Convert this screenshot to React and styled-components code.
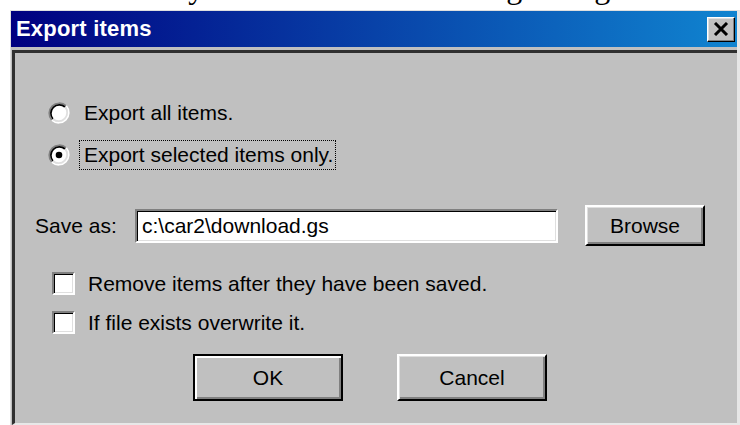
import React from "react";
import styled, { createGlobalStyle } from "styled-components";

const GlobalStyle = createGlobalStyle`
  html, body {
    margin: 0;
    padding: 0;
    background: #fff;
    overflow: hidden;
  }
  * { box-sizing: border-box; }
`;

const Page = styled.div`
  width: 740px;
  height: 425px;
  display: flex;
  flex-direction: column;
  overflow: hidden;
  background: #fff;
`;

/* last line of the document text above the dialog, mostly scrolled off */
const Lead = styled.div`
  height: 10px;
  flex: none;
  display: flex;
  align-items: flex-end;
  overflow: hidden;
  padding-left: 14px;
  font-family: "Liberation Serif", "Times New Roman", serif;
  font-size: 32px;
  white-space: nowrap;
  color: #000;
  span {
    line-height: 36px;
    margin-bottom: 5px;
  }
`;

const Window = styled.div`
  margin-left: 10px;
  width: 730px;
  flex: 1;
  display: flex;
  flex-direction: column;
  background: #c0c0c0;
  border-top: 1px solid #dfdfdf;
  border-left: 1px solid #dfdfdf;
  border-right: 3px solid #e6e6e6;
  font-family: "Liberation Sans", Arial, sans-serif;
  font-size: 21px;
  color: #000;
`;

const TitleBar = styled.div`
  height: 36px;
  flex: none;
  display: flex;
  align-items: center;
  justify-content: space-between;
  padding: 0 2px 0 5px;
  background: linear-gradient(to right, #000080, #1084d0);
`;

const Title = styled.span`
  color: #fff;
  font-weight: bold;
  font-size: 22px;
  letter-spacing: 0.2px;
`;

const CloseButton = styled.button`
  width: 28px;
  height: 25px;
  padding: 0;
  display: flex;
  align-items: center;
  justify-content: center;
  background: #c0c0c0;
  border: 1px solid;
  border-color: #fff #000 #000 #fff;
  box-shadow: inset -1px -1px #808080, inset 1px 1px #dfdfdf;
`;

const Client = styled.div`
  flex: 1;
  margin: 3px 0 0 1px;
  display: flex;
  flex-direction: column;
  border-top: 3px solid #303030;
  border-left: 3px solid #303030;
  border-bottom: 2px solid #e8e8e8;
`;

const RadioGroup = styled.div`
  margin: 45px 0 0 33px;
  display: flex;
  flex-direction: column;
  gap: 12px;
`;

const OptionRow = styled.label`
  height: 30px;
  display: flex;
  align-items: center;
  gap: 9px;
`;

const OptionText = styled.span`
  height: 30px;
  display: flex;
  align-items: center;
  padding: 0 2px 0 4px;
  border: 1px dotted ${(p) => (p.$focused ? "#000" : "transparent")};
  white-space: nowrap;
`;

const SaveRow = styled.div`
  margin: 35px 0 0 20px;
  height: 41px;
  display: flex;
  align-items: center;
`;

const FieldLabel = styled.span`
  width: 100px;
`;

const PathField = styled.div`
  width: 423px;
  height: 34px;
  display: flex;
  align-items: center;
  padding-left: 5px;
  background: #fff;
  border: 2px solid;
  border-color: #808080 #fff #fff #808080;
  box-shadow: inset 1px 1px #000, inset -1px -1px #dfdfdf;
  white-space: nowrap;
`;

const Button = styled.button`
  width: ${(p) => p.$w}px;
  height: ${(p) => p.$h}px;
  margin-left: ${(p) => p.$gap || 0}px;
  padding: 0;
  font-family: "Liberation Sans", Arial, sans-serif;
  font-size: 21px;
  color: #000;
  background: #c0c0c0;
  border: 2px solid;
  border-color: ${(p) => (p.$default ? "#000" : "#fff #000 #000 #fff")};
  box-shadow: ${(p) =>
    p.$default
      ? "inset 2px 2px #fff, inset -2px -2px #808080"
      : "inset 1px 1px #dfdfdf, inset -2px -2px #808080"};
`;

const CheckGroup = styled.div`
  margin: 26px 0 0 37px;
  display: flex;
  flex-direction: column;
  gap: 16px;
`;

const CheckRow = styled.label`
  height: 23px;
  display: flex;
  align-items: center;
  gap: 13px;
  white-space: nowrap;
`;

const CheckBox = styled.span`
  width: 23px;
  height: 23px;
  flex: none;
  background: #fff;
  border: 2px solid;
  border-color: #808080 #fff #fff #808080;
  box-shadow: inset 1px 1px #000, inset -1px -1px #dfdfdf;
`;

const ButtonRow = styled.div`
  margin: 20px 0 0 178px;
  display: flex;
`;

function Radio({ checked }) {
  return (
    <svg width="22" height="22" viewBox="0 0 22 22" style={{ flex: "none" }}>
      <circle cx="11" cy="11" r="9" fill="#fff" />
      <path d="M3.8 18.2 A10.2 10.2 0 0 1 18.2 3.8" stroke="#808080" strokeWidth="1.7" fill="none" />
      <path d="M18.2 3.8 A10.2 10.2 0 0 1 3.8 18.2" stroke="#fff" strokeWidth="1.7" fill="none" />
      <path d="M5.0 17.0 A8.5 8.5 0 0 1 17.0 5.0" stroke="#000" strokeWidth="1.7" fill="none" />
      <path d="M17.0 5.0 A8.5 8.5 0 0 1 5.0 17.0" stroke="#dfdfdf" strokeWidth="1.7" fill="none" />
      {checked && <circle cx="11" cy="11" r="3.3" fill="#000" />}
    </svg>
  );
}

function CloseGlyph() {
  return (
    <svg width="16" height="14" viewBox="0 0 16 14">
      <path d="M2 1 L14 13 M14 1 L2 13" stroke="#000" strokeWidth="3" />
    </svg>
  );
}

export default function App() {
  return (
    <Page>
      <GlobalStyle />
      <Lead>
        <span>when chosen you will see the following dialog box:</span>
      </Lead>
      <Window>
        <TitleBar>
          <Title>Export items</Title>
          <CloseButton aria-label="Close">
            <CloseGlyph />
          </CloseButton>
        </TitleBar>
        <Client>
          <RadioGroup>
            <OptionRow>
              <Radio />
              <OptionText>Export all items.</OptionText>
            </OptionRow>
            <OptionRow>
              <Radio checked />
              <OptionText $focused>Export selected items only.</OptionText>
            </OptionRow>
          </RadioGroup>
          <SaveRow>
            <FieldLabel>Save as:</FieldLabel>
            <PathField>c:\car2\download.gs</PathField>
            <Button $w={120} $h={41} $gap={27}>Browse</Button>
          </SaveRow>
          <CheckGroup>
            <CheckRow>
              <CheckBox />
              Remove items after they have been saved.
            </CheckRow>
            <CheckRow>
              <CheckBox />
              If file exists overwrite it.
            </CheckRow>
          </CheckGroup>
          <ButtonRow>
            <Button $w={150} $h={47} $default>OK</Button>
            <Button $w={150} $h={47} $gap={54}>Cancel</Button>
          </ButtonRow>
        </Client>
      </Window>
    </Page>
  );
}
